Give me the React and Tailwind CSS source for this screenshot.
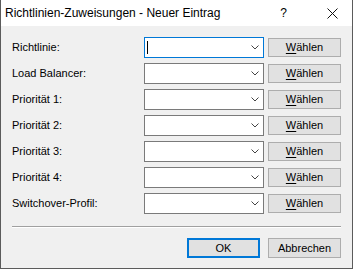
import React from 'react';

const rows = ['Richtlinie:', 'Load Balancer:', 'Priorität 1:', 'Priorität 2:', 'Priorität 3:', 'Priorität 4:', 'Switchover-Profil:'];

const Chevron = () => (
  <svg width="8" height="5" viewBox="0 0 8 5" className="block">
    <path d="M0.5 0.5 L4 4 L7.5 0.5" fill="none" stroke="#444" strokeWidth="1" />
  </svg>
);

const App = () => {
  return (
    <div className="w-[353px] h-[269px] flex flex-col border-x border-b border-[#5b5b5b] bg-[#f0f0f0] text-black font-['Liberation_Sans',Arial,sans-serif] text-[11px] leading-none">
      {/* title bar */}
      <div className="h-[26px] bg-white flex items-center pl-[4px] pr-[14px] text-[12px]">
        <span className="flex-1">Richtlinien-Zuweisungen - Neuer Eintrag</span>
        <span className="mr-[40px]">?</span>
        <svg width="11" height="11" viewBox="0 0 11 11">
          <path d="M0.5 0.5 L10.5 10.5 M10.5 0.5 L0.5 10.5" stroke="#111" strokeWidth="1" />
        </svg>
      </div>

      <div className="flex-1 pt-[11px] px-[11px] flex flex-col">
        <div className="flex flex-col gap-[5px]">
          {rows.map((label, i) => (
            <div key={label} className="flex items-center h-[21px]">
              <div className="w-[132px]">{label}</div>
              <div
                className={`w-[120px] h-[21px] bg-white border flex items-center pl-[2px] pr-[4px] ${
                  i === 0 ? 'border-[#0078d7]' : 'border-[#7a7a7a]'
                }`}
              >
                <div className="flex-1">{i === 0 && <div className="w-px h-[13px] bg-black" />}</div>
                <Chevron />
              </div>
              <button className="ml-[4px] w-[73px] h-[19px] bg-[#e1e1e1] border border-[#adadad] flex items-center justify-center">
                <span>
                  <span className="underline underline-offset-[2px]">W</span>ählen
                </span>
              </button>
            </div>
          ))}
        </div>

        <div className="mt-[12px] h-[2px] border-t border-[#a0a0a0] border-b border-b-white" />

        <div className="mt-[10px] flex justify-end gap-[8px]">
          <button className="w-[73px] h-[20px] bg-[#e1e1e1] border-2 border-[#0078d7] flex items-center justify-center">OK</button>
          <button className="w-[73px] h-[20px] bg-[#e1e1e1] border border-[#adadad] flex items-center justify-center">Abbrechen</button>
        </div>
      </div>
    </div>
  );
};

export default App;
